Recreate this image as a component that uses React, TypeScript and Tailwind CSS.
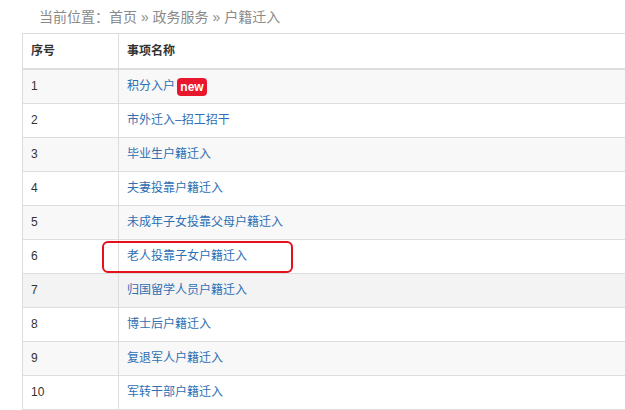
import React from "react";

const rows = [
  "积分入户",
  "市外迁入–招工招干",
  "毕业生户籍迁入",
  "夫妻投靠户籍迁入",
  "未成年子女投靠父母户籍迁入",
  "老人投靠子女户籍迁入",
  "归国留学人员户籍迁入",
  "博士后户籍迁入",
  "复退军人户籍迁入",
  "军转干部户籍迁入",
];

const font = { fontFamily: '"Liberation Sans", "Noto Sans CJK SC", sans-serif' };

export default function App() {
  return (
    <div className="w-[625px] h-[410px] overflow-hidden bg-white" style={font}>
      <div className="h-[33px] pl-[39px] pt-[7px] text-[14px] leading-[20px] text-[#8a8a8a]">
        当前位置：首页 » 政务服务 » 户籍迁入
      </div>
      <div className="ml-[22px] w-[720px] border-l border-t border-[#dddddd] text-[12px] leading-[17px]">
        <div className="flex h-[36px] border-b-2 border-[#dddddd] font-bold text-[#333]">
          <div className="w-[96px] border-r border-[#dddddd] pl-[8px] flex items-center">序号</div>
          <div className="flex-1 pl-[8px] flex items-center">事项名称</div>
        </div>
        {rows.map((name, i) => {
          const bg =
            i === 6 ? "bg-[#f3f3f3]" : i % 2 === 0 ? "bg-[#f8f8f8]" : "bg-white";
          return (
            <div
              key={i}
              className={`relative flex h-[34px] border-b border-[#dddddd] ${bg}`}
            >
              <div className="w-[96px] border-r border-[#dddddd] pl-[8px] flex items-center text-[#333]">
                {i + 1}
              </div>
              <div className="flex-1 pl-[8px] flex items-center text-[#2f6fb3]">
                <span>{name}</span>
                {i === 0 && (
                  <span className="ml-[2px] h-[18px] w-[30px] rounded-[4px] bg-[#e8172d] text-white font-bold text-[12px] leading-[18px] flex items-center justify-center">
                    new
                  </span>
                )}
              </div>
              {i === 5 && (
                <div className="absolute left-[79px] top-[1px] h-[32px] w-[191px] rounded-[6px] border-2 border-[#e5101c]" />
              )}
            </div>
          );
        })}
      </div>
    </div>
  );
}
